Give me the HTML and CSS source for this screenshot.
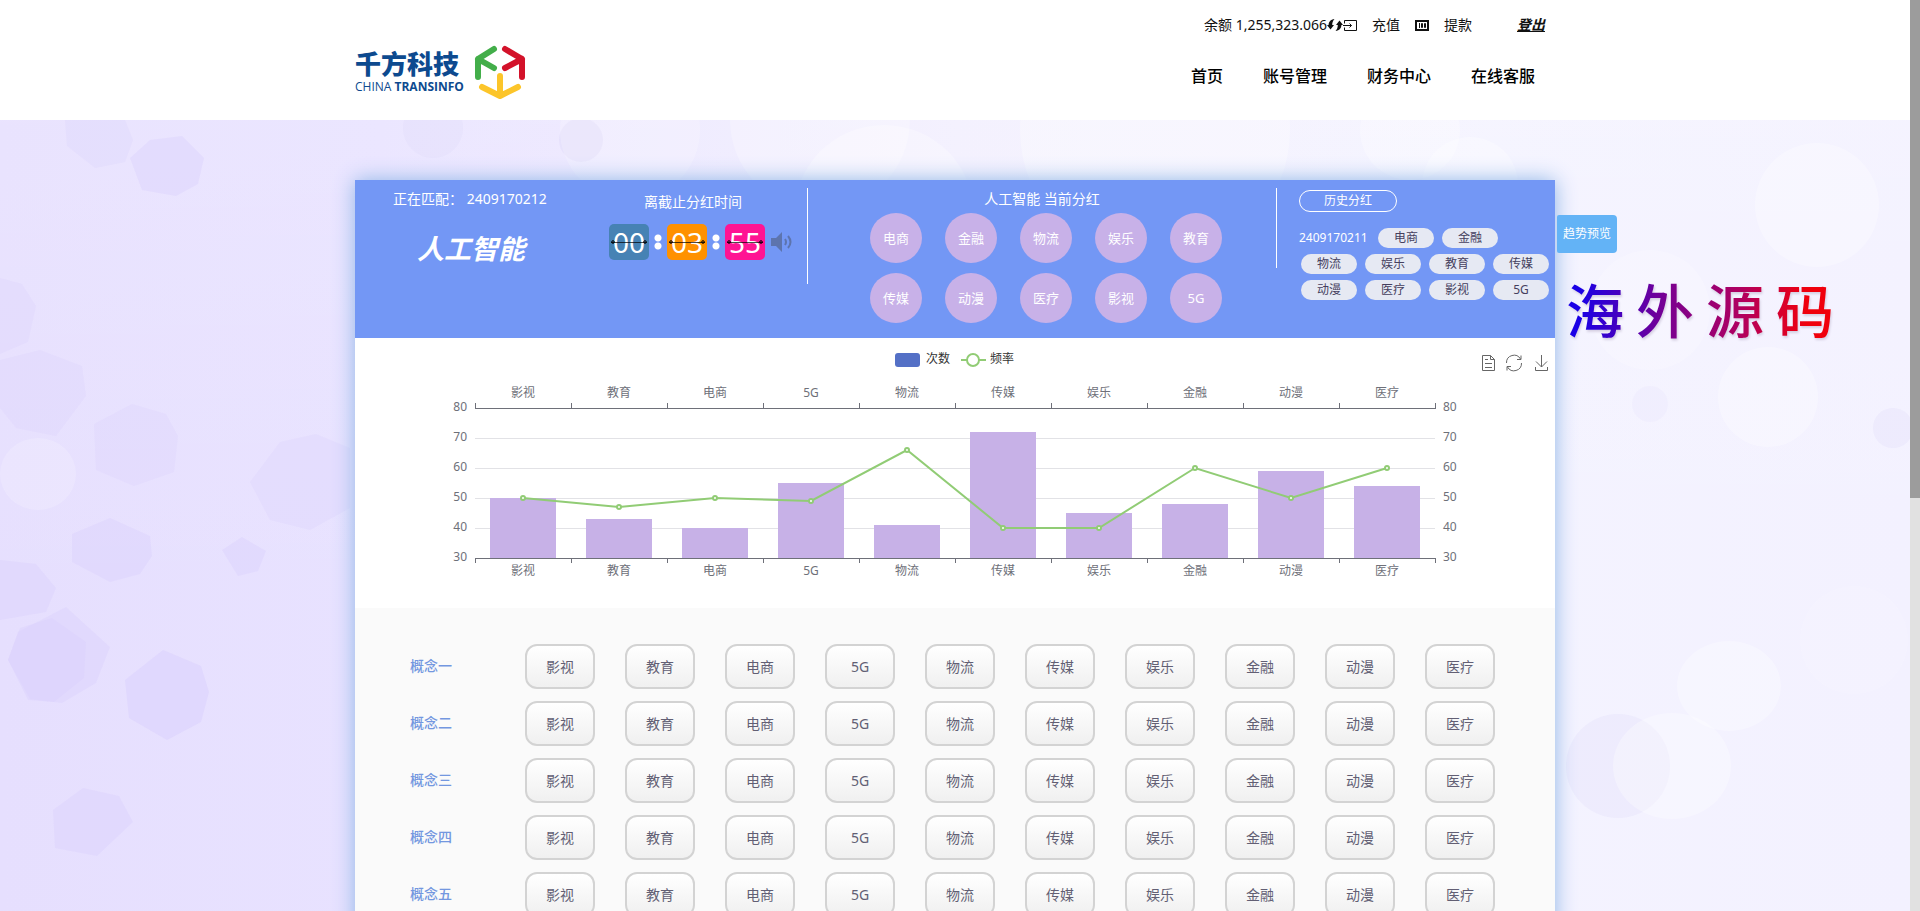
FILE: index.html
```html
<!DOCTYPE html>
<html lang="zh-CN">
<head>
<meta charset="utf-8">
<title>千方科技</title>
<link rel="stylesheet" href="styles.css">
</head>
<body>
<div class="page">
  <header class="header">
    <div class="container header-inner">
      <a class="logo" href="#">
        <span class="logo-words">
          <span class="logo-cn">千方科技</span>
          <span class="logo-en">CHINA <b>TRANSINFO</b></span>
        </span>
        <svg class="logo-mark" viewBox="0 0 52 54" fill="none" stroke-width="6" stroke-linecap="round" stroke-linejoin="round" aria-hidden="true">
          <path stroke="#43ae4a" d="M20 4 4 14v18M4 14l16 9"/>
          <path stroke="#d3122a" d="M31 4 48 14v18M48 14 31 23"/>
          <path stroke="#fcc52a" d="M8 42l18 9 18-9M26 31v20"/>
        </svg>
      </a>
      <div class="header-side">
        <div class="account">
          <span>余额 1,255,323.066</span>
          <button class="icon-btn" type="button" aria-label="刷新">
            <svg width="16" height="12" viewBox="0 0 16 12" fill="#111"><path d="M7.500 0C3.500.5 1.600 3 1.600 6H0l3.500 4.500L7 6H5.200C5.200 3.500 6 1.500 7.500 0z"/><path d="M8.500 12c4-.5 5.900-3 5.900-6H16l-3.500-4.500L9 6h1.800C10.800 8.500 10 10.500 8.500 12z"/></svg>
          </button>
          <a class="account-link" href="#"><svg width="14" height="11" viewBox="0 0 14 11" fill="none" stroke="#111"><path d="M1.500 3.500v-3h12v10h-12v-3M0 5.500h8.500M6.500 3.500l2 2-2 2"/></svg>充值</a>
          <a class="account-link spaced" href="#"><svg width="14" height="11" viewBox="0 0 14 11" fill="none" stroke="#111"><path stroke-width="2" d="M1 1h12v9H1z"/><path d="M4.500 3v5M6.500 3.500h1v4h-1zM9.500 3.500h1v4h-1z"/></svg>提款</a>
          <a class="logout" href="#">登出</a>
        </div>
        <nav class="nav">
          <a href="#">首页</a><a href="#">账号管理</a><a href="#">财务中心</a><a href="#">在线客服</a>
        </nav>
      </div>
    </div>
  </header>

  <main class="stage">
    <svg class="bokeh" viewBox="0 0 1910 791" preserveAspectRatio="none" aria-hidden="true">
      <g fill="#d9cffd" fill-opacity=".4">
        <path d="M130 38l20-18 32-4 22 22-6 26-22 12-34-6z"/>
        <path d="M65 0h60l8 20-8 22-30 6-28-22z" fill-opacity=".25"/>
        <path d="M0 158l22 6 14 22-8 36-28 12z" fill-opacity=".3"/>
        <path d="M0 240l40-10 42 16 4 30-30 40-40-8-16-20z" fill-opacity=".3"/>
        <path d="M94 304l38-20 34 10 12 22-4 36-40 14-38-16z" fill-opacity=".3"/>
        <path d="M250 362l30-40 36-8 34 14v60l-40 22-40-10z" fill-opacity=".3"/>
        <path d="M72 414l38-16 40 18 2 20-12 18-30 8-38-20z"/>
        <path d="M222 430l20-13 24 14-8 20-20 5z"/>
        <path d="M0 440l36 4 20 24-10 24-46 8z"/>
        <path d="M8 540l10-28 48-25 44 40-14 36-34 20-32-4z"/>
        <path d="M8 540l12-32 32-10 34 24-2 36-30 24-26-2z"/>
        <path d="M125 560l38-30 38 16 8 26-8 30-34 18-38-22z" fill-opacity=".5"/>
        <path d="M53 690l30-22 36 8 14 26-36 34-42-8z"/>
      </g>
      <g fill="#dcd6f8" fill-opacity=".25">
        <circle cx="1618" cy="646" r="52"/><circle cx="1893" cy="308" r="20"/><circle cx="1650" cy="284" r="18" fill-opacity=".15"/>
        <circle cx="433" cy="8" r="30"/><circle cx="581" cy="20" r="22" fill-opacity=".4"/>
      </g>
      <g fill="#fff" fill-opacity=".3">
        <ellipse cx="38" cy="354" rx="38" ry="36" fill-opacity=".18"/>
        <circle cx="630" cy="10" r="70" fill-opacity=".2"/><circle cx="820" cy="0" r="90" fill-opacity=".25"/>
        <circle cx="884" cy="95" r="90"/><circle cx="1155" cy="10" r="135"/><circle cx="1410" cy="10" r="50"/><circle cx="1470" cy="65" r="48"/>
        <ellipse cx="1729" cy="566" rx="52" ry="45"/><ellipse cx="1672" cy="646" rx="59" ry="53"/>
        <circle cx="1817" cy="85" r="62"/><circle cx="1768" cy="277" r="50"/><circle cx="1650" cy="190" r="60" fill-opacity=".2"/>
        <circle cx="1854" cy="520" r="54" fill-opacity=".12"/>
      </g>
    </svg>

    <div class="container panel">
      <section class="status">
        <div class="match">
          <p>正在匹配： 2409170212</p>
          <h1>人工智能</h1>
        </div>
        <div class="countdown">
          <p>离截止分红时间</p>
          <div class="clock">
            <span class="flip steel">00</span><span class="colon"></span>
            <span class="flip orange">03</span><span class="colon"></span>
            <span class="flip pink">55</span>
            <button class="icon-btn sound" type="button" aria-label="声音">
              <svg width="22" height="20" viewBox="0 0 22 20"><path fill="#5d74ae" d="M0 6h5l6-6v20l-6-6H0z"/><path fill="none" stroke="#5d74ae" stroke-width="2" d="M14 7q2 3 0 6M17 4q5 6 0 12"/></svg>
            </button>
          </div>
        </div>
        <div class="current">
          <h2>人工智能 当前分红</h2>
          <ul class="circles">
            <li>电商</li><li>金融</li><li>物流</li><li>娱乐</li><li>教育</li>
            <li>传媒</li><li>动漫</li><li>医疗</li><li>影视</li><li>5G</li>
          </ul>
        </div>
        <div class="history">
          <button class="history-btn" type="button">历史分红</button>
          <div class="history-row first"><span class="issue">2409170211</span><span class="pill">电商</span><span class="pill">金融</span></div>
          <div class="history-row"><span class="pill">物流</span><span class="pill">娱乐</span><span class="pill">教育</span><span class="pill">传媒</span></div>
          <div class="history-row"><span class="pill">动漫</span><span class="pill">医疗</span><span class="pill">影视</span><span class="pill">5G</span></div>
        </div>
      </section>

      <section class="chart">
        <svg id="chart" viewBox="0 0 1200 270" role="img" aria-label="次数与频率"></svg>
      </section>

      <section class="bets" id="bets"></section>

      <button class="trend" type="button">趋势预览</button>
      <div class="brand"><span>海</span><span>外</span><span>源</span><span>码</span></div>
    </div>
  </main>
</div>
<div class="scrollbar" aria-hidden="true"><div class="thumb"></div></div>
<script src="main.js"></script>
</body>
</html>
```
FILE: styles.css
```css
* { box-sizing: border-box; }
html, body { margin: 0; height: 100%; }
body {
  display: flex;
  height: 100vh;
  overflow: hidden;
  background: #fff;
  color: #111;
  font: 14px/20px "Noto Sans", "Noto Sans CJK SC", sans-serif;
}
h1, h2, p, ul { margin: 0; padding: 0; }
ul { list-style: none; }
a { color: inherit; text-decoration: none; }
button { margin: 0; font: inherit; cursor: pointer; }
svg { display: block; }

.page { flex: 1; min-width: 0; overflow: hidden; }
.container { width: 100%; max-width: 1200px; margin: 0 auto; }

.scrollbar { width: 10px; background: #e1e1e1; }
.thumb { height: 498px; max-height: 100%; background: #9c9c9c; }

.header { background: #fff; }
.header-inner { display: flex; justify-content: space-between; height: 120px; }
.logo { display: flex; align-items: flex-start; gap: 12px; padding-top: 45px; color: #0d4a8f; }
.logo-words { display: flex; flex-direction: column; width: 107px; padding-top: 4px; }
.logo-cn { font-size: 26px; line-height: 30px; font-weight: 900; }
.logo-en { font: 12px/16px "Open Sans", "Noto Sans", sans-serif; white-space: nowrap; }
.logo-mark { width: 52px; height: 54px; }
.header-side { display: flex; flex-direction: column; align-items: flex-end; padding-top: 15px; }
.account { display: flex; align-items: center; padding-right: 10px; }
.icon-btn { padding: 0; border: 0; background: none; }
.account-link { display: flex; align-items: center; gap: 15px; }
.account-link.spaced { margin-left: 15px; }
.logout { margin-left: 45px; font-weight: 700; font-style: italic; text-decoration: underline; }
.nav { display: flex; gap: 40px; padding: 29px 20px 0 0; font-size: 16px; line-height: 24px; font-weight: 500; color: #000; }

.stage {
  position: relative;
  min-height: calc(100vh - 120px);
  padding-top: 60px;
  background:
    linear-gradient(rgba(255, 255, 255, .14), rgba(255, 255, 255, 0) 500px),
    linear-gradient(90deg, #e6dffe 0%, #e8e2ff 20%, #f2effe 50%, #f4f3ff 78%, #f3f1ff 100%);
}
.bokeh { position: absolute; left: 0; top: 0; width: 100%; height: calc(100vh - 120px); }
.panel { position: relative; background: #fff; box-shadow: 0 0 20px #8fb6e6; }

.status { display: flex; align-items: flex-start; height: 158px; background: #7397f5; color: #fff; }
.match { width: 236px; padding: 9px 0 0 38px; }
.match h1 { padding: 22px 0 0 24px; font-size: 27px; line-height: 36px; font-weight: 700; font-style: italic; }
.countdown { width: 217px; height: 96px; margin-top: 8px; padding-top: 4px; border-right: 1px solid #fff; }
.countdown p { padding-right: 12px; text-align: center; }
.clock { display: flex; align-items: center; padding: 12px 0 0 18px; }
.flip { position: relative; width: 40px; height: 36px; border-radius: 5px; font-size: 28px; line-height: 36px; text-align: center; }
.flip::before { content: ""; position: absolute; left: 2px; right: 2px; top: 18px; height: 1px; background: rgba(0, 0, 0, .7); }
.flip::after {
  content: ""; position: absolute; left: 2px; right: 2px; top: 16px; height: 4px;
  background: radial-gradient(circle at 2px 2px, rgba(0, 0, 0, .6) 2px, transparent 2px), radial-gradient(circle at 34px 2px, rgba(0, 0, 0, .6) 2px, transparent 2px);
}
.steel { background: #4682b4; }
.orange { background: #ff9100; }
.pink { background: #ff1493; }
.colon { width: 8px; height: 16px; margin: 0 5px; background: radial-gradient(circle, #fff 3px, transparent 4px) 0 0 / 8px 8px; }
.sound { margin-left: 6px; }
.current { flex: 1; padding-top: 9px; }
.current h2 { font-size: 14px; line-height: 20px; font-weight: 400; text-align: center; }
.circles { display: grid; grid-template-columns: repeat(5, 52px); justify-content: center; gap: 10px 23px; padding: 4px 0 0 8px; }
.circles li { height: 50px; border-radius: 50%; background: #c8b1e8; font-size: 13px; line-height: 50px; text-align: center; }
.history { position: relative; width: 279px; margin-top: 8px; padding-left: 23px; font-size: 12px; }
.history::before { content: ""; position: absolute; left: 0; top: 0; width: 1px; height: 80px; background: #fff; }
.history-btn { display: block; width: 98px; height: 22px; margin: 2px 0 16px; padding: 0; border: 1px solid #fff; border-radius: 11px; background: none; color: #fff; line-height: 20px; }
.history-row { display: flex; gap: 8px; margin-bottom: 6px; padding-left: 2px; }
.history-row.first { padding-left: 0; }
.issue { width: 71px; line-height: 20px; }
.pill { width: 56px; height: 20px; border-radius: 10px; background: #e6e9f3; color: #453f5e; line-height: 20px; text-align: center; }

.chart svg { width: 100%; height: auto; font-size: 12px; }
.chart text { fill: #6e7079; dominant-baseline: central; }
.chart .legend { fill: #333; }
.mid { text-anchor: middle; }
.end { text-anchor: end; }

.bets { padding: 36px 60px 36px 55px; background: #fafafa; }
.bet-row { display: flex; align-items: center; justify-content: space-between; margin-bottom: 12px; }
.bet-row h3 { width: 85px; margin: 0; padding-bottom: 2px; font-size: 14px; line-height: 20px; font-weight: 500; color: #7397e0; }
.bet-row button { width: 70px; height: 45px; padding: 0; border: 2px solid #d3d3d3; border-radius: 12px; background: linear-gradient(#fff, #f0f0f0); color: #625f74; }

.trend { position: absolute; left: 100%; top: 35px; width: 60px; height: 38px; margin-left: 2px; padding: 0; border: 0; border-radius: 2px 4px 4px 2px; background: #63b3f6; color: #fff; font-size: 12px; }
.brand {
  position: absolute; left: 100%; top: 94px; margin-left: 11px;
  display: flex; gap: 12px;
  font-family: "Noto Sans CJK SC", sans-serif; font-size: 58px; line-height: 68px; font-weight: 500;
  background: linear-gradient(90deg, #1a00e6 5%, #7a0090 38%, #b00060 65%, #f0000c 90%);
  -webkit-background-clip: text; background-clip: text; color: transparent;
  filter: drop-shadow(1px 2px 1px #d5cfe2);
}
```
FILE: main.js
```js
const names = ['影视', '教育', '电商', '5G', '物流', '传媒', '娱乐', '金融', '动漫', '医疗'];
const counts = [50, 43, 40, 55, 41, 72, 45, 48, 59, 54];
const rates = [50, 47, 50, 49, 66, 40, 40, 60, 50, 60];

const left = 120, right = 1080, bottom = 220, step = 96;
const y = v => bottom - (v - 30) * 3;
const cx = i => left + step * i + step / 2;

let out = '';
for (let v = 30; v <= 80; v += 10) {
  if (v > 30 && v < 80) out += `<path stroke="#e2e2e6" d="M${left} ${y(v) + .5}H${right}"/>`;
  out += `<text class="end" x="112" y="${y(v) - 2}">${v}</text><text x="1088" y="${y(v) - 2}">${v}</text>`;
}
counts.forEach((v, i) => {
  out += `<rect x="${left + step * i + 15}" y="${y(v)}" width="66" height="${bottom - y(v)}" fill="#c7b1e7"/>`;
  out += `<text class="mid" x="${cx(i)}" y="54">${names[i]}</text><text class="mid" x="${cx(i)}" y="232">${names[i]}</text>`;
});
let axes = `M${left} 70.5H${right + 1}M${left} 220.5H${right + 1}`;
for (let i = 0; i <= 10; i++) {
  const x = left + step * i + .5;
  axes += `M${x} 65V70M${x} 221V225`;
}
out += `<path fill="none" stroke="#6e7079" d="${axes}"/>`;
out += `<polyline fill="none" stroke="#91cc75" stroke-width="2" points="${rates.map((v, i) => cx(i) + ',' + y(v)).join(' ')}"/>`;
rates.forEach((v, i) => { out += `<circle cx="${cx(i)}" cy="${y(v)}" r="2" fill="#fff" stroke="#91cc75" stroke-width="2"/>`; });
out += `<rect x="540" y="15" width="25" height="14" rx="3" fill="#5470c6"/><text class="legend" x="571" y="20">次数</text>`;
out += `<path stroke="#91cc75" stroke-width="2" d="M606 22H631"/><circle cx="618" cy="22" r="6" fill="#fff" stroke="#91cc75" stroke-width="2"/><text class="legend" x="635" y="20">频率</text>`;
out += `<g fill="none" stroke="#666"><path d="M1127.500 17.500h8l4 4v11h-12zM1135.500 17.500v4h4M1130 21.500h3M1130 25.500h7M1130 29.500h7"/>
<path d="M1151.500 25a7.500 7.500 0 0 1 14-4M1166 17.500v4h-4M1166.500 25a7.500 7.500 0 0 1-14 4M1152 32.500v-4h4"/>
<path d="M1186.500 17v12M1181 23.500l5.500 5.500 5.500-5.500M1180.500 29v3.500h12V29"/></g>`;
document.getElementById('chart').innerHTML = out;

document.getElementById('bets').innerHTML = ['一', '二', '三', '四', '五', '六'].map(n =>
  `<div class="bet-row"><h3>概念${n}</h3>${names.map(t => `<button type="button">${t}</button>`).join('')}</div>`
).join('');
```
